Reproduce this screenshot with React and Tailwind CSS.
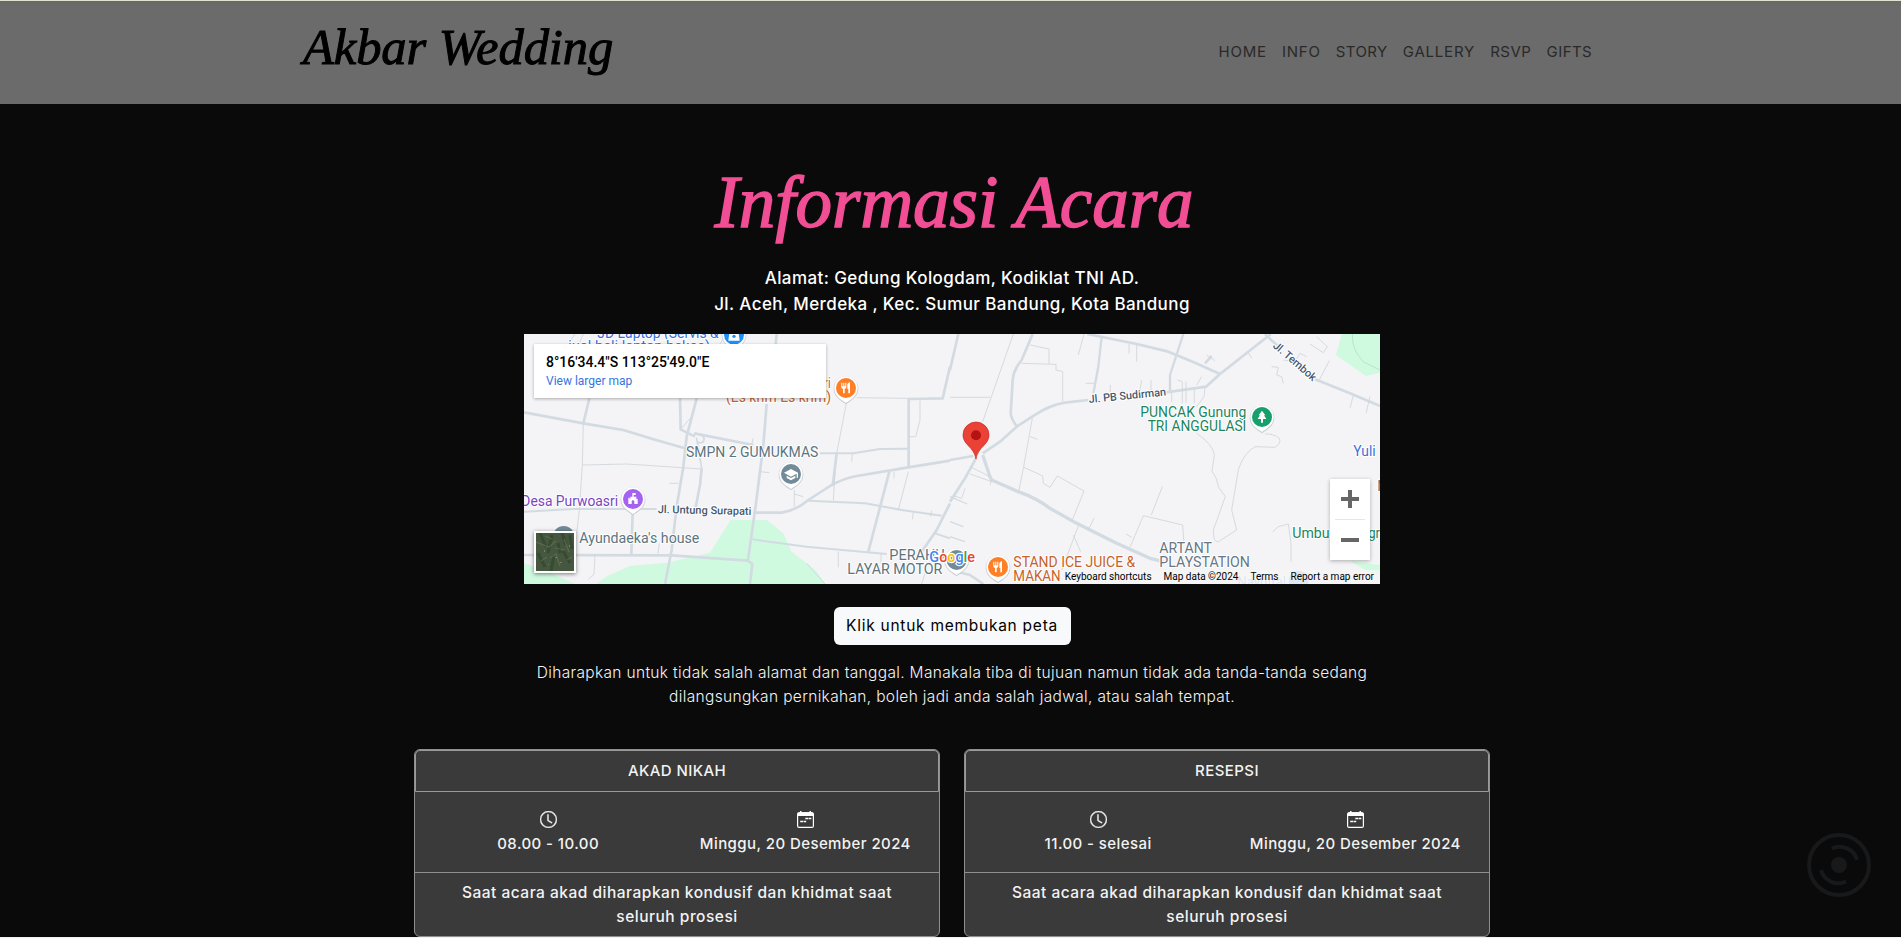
import React from "react";
import { BsClock } from "react-icons/bs";

const NAV = [
  { label: "HOME", cls: "tracking-[0.8px]" },
  { label: "INFO", cls: "tracking-[0.7px]" },
  { label: "STORY", cls: "tracking-[0.4px]" },
  { label: "GALLERY", cls: "tracking-[0.8px]" },
  { label: "RSVP", cls: "tracking-[0.5px]" },
  { label: "GIFTS", cls: "tracking-[0.4px]" },
];

function Header() {
  return (
    <header className="h-[104px] border-t border-[#dfe4d2] bg-[#6b6b6b]">
      <div className="h-[6px] bg-gradient-to-b from-[#686a60] to-[#6b6b6b]" />
      <div className="mx-auto flex h-[91px] w-[1301px] items-center justify-between">
        <a className="mt-[-11px] whitespace-nowrap pl-[3px] font-['Liberation_Serif',cursive] text-[50.6px] italic leading-none tracking-[-0.1px] text-black [-webkit-text-stroke:1px_black]">
          Akbar Wedding
        </a>
        <nav className="-mt-px flex gap-[15.2px] pr-[9px] text-[15px] leading-6 text-[#292929]">
          {NAV.map((n) => (
            <a key={n.label} className={n.cls}>{n.label}</a>
          ))}
        </nav>
      </div>
    </header>
  );
}

function Pin({ x, y, color, children }) {
  return (
    <g transform={`translate(${x} ${y})`}>
      <path d="M0 49C-8 41-37 30-37 2A37 37 0 0 1 37 2C37 30 8 41 0 49z" fill="#c9cdd2" />
      <path d="M0 45C-8 38-35 28-35 0A35 35 0 0 1 35 0C35 28 8 38 0 45z" fill="#fff" />
      <circle r="30" fill={color} />
      <g fill="#fff" stroke="none">{children}</g>
    </g>
  );
}

function Label({ x, y, w, size = 43, fill, children, weight = 400, transform, anchor }) {
  return (
    <text
      x={x} y={y} textLength={w} lengthAdjust="spacingAndGlyphs" fontSize={size} fontWeight={weight}
      fill={fill} stroke="#fff" strokeWidth="6" strokeLinejoin="round" paintOrder="stroke"
      transform={transform} textAnchor={anchor}
    >
      {children}
    </text>
  );
}

const fork = (
  <>
    <path d="M-14-16h3v11h3v-11h3v11h3v-11h3v14q0 4-5 5v13h-5V3q-5-1-5-5z" />
    <path d="M4-8q0-8 8-9v33H7V3H4z" />
  </>
);

function MapCanvas() {
  return (
    <svg viewBox="0 0 856 250" className="block h-[250px] w-[856px] font-['Roboto',sans-serif]">
      <rect width="856" height="250" fill="#f4f3f5" />
      {/* western half */}
      <g transform="translate(-4 -4) scale(0.33333)">
        <g fill="#cffae0">
          <path d="M632 570H740L790 610 815 665 860 700 890 725 916 762H228L262 738 330 708 440 698 570 668z" />
          <path d="M12 700L60 715 165 762H12z" />
        </g>
        <g fill="none" stroke="#d3dbe2" strokeWidth="8" strokeLinejoin="round">
          <path d="M12 247L190 280 310 300 400 328 495 355" />
          <path d="M208 205L190 280" />
          <path d="M480 205L482 298 525 320" />
          <path d="M530 205L500 320 490 410 470 530 455 660 435 762" />
          <path d="M522 310L700 345" />
          <path d="M740 222L730 345 708 520 684 690" />
          <path d="M545 415L540 465 527 532" />
          <path d="M12 545L160 537 410 537" strokeWidth="6" />
          <path d="M338 550L334 672" />
          <path d="M12 675L455 676 684 692 697 702 690 762" />
          <path d="M700 548L785 548Q830 540 865 510L930 468Q970 445 1010 438L1165 412 1290 392" />
          <path d="M900 370L1000 370 1080 357 1163 356" strokeWidth="6" />
          <path d="M1166 412L1166 207 1268 205 1290 110" />
          <path d="M950 370L938 468" />
          <path d="M865 512L1035 520 1145 540 1265 557" strokeWidth="6" />
          <path d="M1108 425L1045 665" />
          <path d="M697 628L860 650 1100 672" strokeWidth="6" />
          <path d="M1290 520L1250 600 1205 665" />
          <path d="M1245 610L1290 625" strokeWidth="6" />
          <path d="M770 12L767 42" />
          <path d="M525 310Q560 315 550 335Q530 345 530 325L545 415" strokeWidth="5" />
        </g>
        <g fill="none" stroke="#cfd5da" strokeWidth="2.5">
          <path d="M190 280L187 405 178 540 170 610" />
          <path d="M187 405L320 402 545 417" />
          <path d="M980 215L950 370M1165 425L1135 540M945 425L940 512M1010 203L1166 205" />
          <path d="M823 480V530M823 492L850 500M720 425L748 428M448 460H475M997 370L995 395" />
          <path d="M1200 212L1200 270 1187 320H1168M1122 425V445M955 665V712M1083 672V700" />
          <path d="M225 676L222 733 205 748M418 640L414 670M1180 548L1177 568M1235 542L1232 560" />
          <path d="M860 700L915 762M1215 730L1205 762M510 265L485 295M699 325L695 345M190 12L178 40" />
          <path d="M165 12L145 42M620 12L600 42" />
        </g>
        <Label x={232} y={24} w={364} fill="#3871d8">JD Laptop (Servis &amp;</Label>
        <Label x={145} y={62} w={425} fill="#3871d8">jual beli laptop bekas)</Label>
        <Pin x={642} y={14} color="#1e90f5">
          <path d="M-14-4H14L17 18H-17z" /><path d="M-7-3v-5a7 7 0 0 1 14 0v5" fill="none" stroke="#fff" strokeWidth="4" />
          <circle cy="5" r="5" fill="#1e90f5" />
        </Pin>
        <Label x={932} y={174} w={140} anchor="end" fill="#c5622c">Es krim ri</Label>
        <Label x={618} y={216} w={315} fill="#c5622c">(Es krim Es krim)</Label>
        <Pin x={978} y={174} color="#ff7f27">{fork}</Pin>
        <Label x={498} y={382} w={397} fill="#5b7480">SMPN 2 GUMUKMAS</Label>
        <Pin x={813} y={432} color="#728b98">
          <path d="M-21-4L0-15 21-4 21 11H17V-1L0 8z" /><path d="M-13 5L0 12 13 5V12L0 19-13 12z" />
        </Pin>
        <Label x={4} y={528} w={290} fill="#7a45c0">Desa Purwoasri</Label>
        <Pin x={339} y={507} color="#a561f2">
          <path d="M-2-18H8V-12H2V-7H10V0H14V15H4V8A4 4 0 0 0-4 8V15H-14V-4H-10V0H-8V-7H-2z" />
        </Pin>
        <Label x={413} y={549} w={281} size={33} weight={500} fill="#46586b" transform="rotate(1.2 413 549)">Jl. Untung Surapati</Label>
        <circle cx="131" cy="620" r="32" fill="#728b98" />
        <Label x={178} y={640} w={360} fill="#5b7480">Ayundaeka's house</Label>
      </g>
      {/* eastern half */}
      <g transform="translate(426 -4) scale(0.33333)">
        <g fill="#cffae0">
          <path d="M1175 12H1290V128L1248 138 1158 75z" />
          <path d="M1200 692L1290 706V735L1245 720z" />
        </g>
        <g fill="none" stroke="#d3dbe2" strokeWidth="8" strokeLinejoin="round">
          <path d="M25 12L0 120M0 390L70 378" />
          <path d="M248 12L215 90Q190 120 188 150L182 250Q185 270 200 288" />
          <path d="M78 385L45 445 0 515" />
          <path d="M98 375L120 440 125 450 205 485Q260 505 300 535L380 580 500 640 600 685 640 695" strokeWidth="10" />
          <path d="M98 370L150 335 200 290 255 255Q300 225 345 218L415 210" />
          <path d="M648 187L768 170 810 132 955 18 962 12" />
          <path d="M412 12L560 42 655 65 735 98 810 132" />
          <path d="M455 20L445 110 430 190M700 12L660 135V185" strokeWidth="7" />
          <path d="M945 12L985 50M1095 148L1200 190 1290 228" />
          <path d="M765 100L785 78" />
          <path d="M0 620L45 635M0 500L52 522M0 575L40 590" strokeWidth="4" />
          <path d="M0 720L60 735 100 762" />
        </g>
        <g fill="none" stroke="#cfd5da" strokeWidth="2.5">
          <path d="M190 12L98 275M0 202H120" />
          <path d="M215 100L318 103V120L338 125V215M240 45L297 57V102M402 12L385 75" />
          <path d="M247 265L220 415 205 490M240 320L262 328M222 412L278 438 280 460 300 472 322 438 402 483 365 575" />
          <path d="M60 410L120 440M60 432L125 455M125 450L120 465" />
          <path d="M637 470L604 555M540 652L580 557 698 585 702 640M528 612L545 622M385 588L335 720M370 615L392 665M432 565L415 600" />
          <path d="M740 310Q790 345 793 375L786 425Q800 440 805 470L826 500 790 600Q790 640 805 635L860 600 845 540 865 420Q880 370 915 350L975 352Q995 340 988 325Q970 310 945 312" />
          <path d="M765 172L762 200 740 230M537 42V70M560 45V95M407 160H432M481 165V200M575 150L570 180M603 150V180" />
          <path d="M683 150L697 155V220M708 155V218M665 187V215M733 178V220M660 150V180M740 165L755 140M770 75L795 92M895 68L905 85" />
          <path d="M1100 20L1132 50 1120 68 1080 42M1070 80L1050 70 1035 95 1000 90M965 110L985 112 980 135 995 140 1000 160M1138 92L1108 150M1210 195L1200 235M1260 200L1248 250" />
          <path d="M1207 12Q1205 60 1240 95L1290 120" stroke="#b6ddc6" />
          <path d="M968 605L985 590 1015 582 1023 640V695M45 475L35 505 12 498" />
        </g>
        <Label x={417} y={219} w={233} size={33} weight={500} fill="#46586b" transform="rotate(-5.5 417 219)">Jl. PB Sudirman</Label>
        <Label x={967} y={50} w={160} size={33} weight={500} fill="#46586b" transform="rotate(41 967 50)">Jl. Tembok</Label>
        <Label x={571} y={261} w={318} fill="#1b8560">PUNCAK Gunung</Label>
        <Label x={593} y={303} w={296} fill="#1b8560">TRI ANGGULASI</Label>
        <Pin x={936} y={261} color="#17a06c">
          <path d="M0-19L10-5H6L13 6H3V17H-3V6H-13L-6-5H-10z" />
        </Pin>
        <Label x={1210} y={377} w={67} fill="#3871d8">Yuli</Label>
        <Label x={1282} y={482} w={30} fill="#5b7480">N</Label>
        <Label x={1027} y={624} w={122} fill="#1b8560">Umbul</Label>
        <Label x={1290} y={624} w={80} anchor="end" fill="#1b8560">Segr</Label>
        <Label x={628} y={669} w={158} fill="#687682">ARTANT</Label>
        <Label x={628} y={711} w={272} fill="#687682">PLAYSTATION</Label>
        <Label x={-182} y={690} w={166} fill="#5b7480">PERAHU</Label>
        <Label x={-308} y={732} w={285} fill="#5b7480">LAYAR MOTOR</Label>
        <Pin x={20} y={690} color="#728b98" />
        <Pin x={144} y={711} color="#ff7f27">{fork}</Pin>
        <Label x={190} y={711} w={366} fill="#c5622c">STAND ICE JUICE &amp;</Label>
        <Label x={190} y={753} w={142} fill="#c5622c">MAKAN</Label>
        <circle cx="1046" cy="752" r="30" fill="#9cc3f2" />
        <Label x={862} y={771} w={146} fill="#8fb4e8">Nayutral</Label>
        {/* destination marker */}
        <path d="M78 387C72 350 39 345 39 315A39 39 0 0 1 117 315C117 345 84 350 78 387z" fill="#ea4335" stroke="#c5221f" strokeWidth="2" />
        <circle cx="78" cy="316" r="15" fill="#b31412" />
        <text x="-62" y="696" fontSize="46" fontWeight="500" textLength="137" lengthAdjust="spacingAndGlyphs" stroke="#fff" strokeWidth="7" paintOrder="stroke">
          <tspan fill="#4285f4">G</tspan><tspan fill="#ea4335">o</tspan><tspan fill="#fbbc04">o</tspan><tspan fill="#4285f4">g</tspan><tspan fill="#34a853">l</tspan><tspan fill="#ea4335">e</tspan>
        </text>
      </g>
    </svg>
  );
}

function Satellite() {
  return (
    <svg viewBox="0 0 38 38" className="block h-full w-full" fill="none">
      <rect width="38" height="38" fill="#46573f" />
      <g stroke="#30462f" strokeWidth="3" opacity=".7">
        <path d="M4 0L10 14M16 2L12 20M26 0L30 12M2 20L9 34M18 22L15 38M27 18L34 30M22 10L24 20M34 2L36 16" />
      </g>
      <g stroke="#6d7656" strokeWidth="1.2" opacity=".6">
        <path d="M0 9L13 14 20 8M14 25L20 21 24 33M28 6L33 19M5 28L11 24M19 15L29 17M9 3L16 6M31 27L36 24" />
      </g>
      <g fill="#8a8f78" opacity=".7">
        <path d="M19 24h2v1h-2zM8 17h1v2H8zM33 12h1v2h-1zM24 29h2v1h-2zM12 31h1v1h-1z" />
      </g>
    </svg>
  );
}

function EventMap() {
  return (
    <div className="relative mt-[17px] h-[250px] w-[856px] overflow-hidden font-['Roboto',sans-serif]">
      <MapCanvas />
      <div className="absolute left-[10px] top-[10px] h-[54px] w-[292px] bg-white pl-3 pt-[10px] shadow-[0_1px_3px_rgba(0,0,0,0.3)]">
        <div className="text-[14px] font-medium leading-4 text-black">8°16'34.4"S 113°25'49.0"E</div>
        <div className="mt-[3px] text-[12px] leading-4 text-[#3574e2]">View larger map</div>
      </div>
      <div className="absolute left-[10px] top-[197px] h-[42px] w-[42px] border-2 border-white shadow-[0_1px_4px_rgba(0,0,0,0.5)]">
        <Satellite />
      </div>
      <div className="absolute left-[806px] top-[145px] flex h-[81px] w-[40px] flex-col items-center bg-white shadow-[0_1px_4px_rgba(0,0,0,0.3)]">
        <div className="flex h-10 items-center justify-center">
          <svg width="18" height="18" viewBox="0 0 18 18" fill="#666"><path d="M7 0h4v7h7v4h-7v7H7v-7H0V7h7z" /></svg>
        </div>
        <div className="h-px w-[30px] bg-[#e6e6e6]" />
        <div className="flex h-10 items-center justify-center">
          <svg width="18" height="4" viewBox="0 0 18 4"><path d="M0 0h18v4H0z" fill="#666" /></svg>
        </div>
      </div>
      <div className="absolute bottom-0 right-0 flex h-[14px] items-center gap-[12px] bg-[#f5f5f5]/75 pl-[5px] pr-[6px] text-[10px] leading-none text-black">
        <span>Keyboard shortcuts</span>
        <span>Map data ©2024</span>
        <span>Terms</span>
        <span>Report a map error</span>
      </div>
    </div>
  );
}

function CalendarIcon() {
  return (
    <svg width="17" height="17" viewBox="0 0 17 17">
      <path d="M2 1.2h13a1.5 1.5 0 0 1 1.5 1.5V5H.5V2.700A1.500 1.500 0 0 1 2 1.200zM3 0h1.500v2H3zM12.500 0H14v2h-1.500z" fill="#fff" />
      <rect x=".6" y="1.800" width="15.800" height="14.600" rx="1.500" fill="none" stroke="#fff" strokeWidth="1.200" />
      <path d="M8.300 7.500h6M3.200 10.500h6" stroke="#fff" strokeWidth="1.500" strokeDasharray="3.200 .5 2.300 0" />
    </svg>
  );
}

function EventCard({ title, time, date }) {
  return (
    <article className="flex h-[188px] w-[525.5px] flex-col rounded-[6px] border border-[#8f8f8f] bg-[#3a3a3a] text-center text-[15px] font-medium leading-6 tracking-[0.42px] text-[#f3f3f3]">
      <h2 className="h-[42px] rounded-t-[5px] border border-[#9a9a9a] pt-[8px]">{title}</h2>
      <div className="grid h-[80px] grid-cols-2 pt-[19px]">
        <div className="flex flex-col items-center gap-[4px] pl-[4px]">
          <BsClock className="block h-[17px] w-[17px] stroke-current [stroke-width:0.4px]" />
          <span>{time}</span>
        </div>
        <div className="flex flex-col items-center gap-[4px] pr-[5px]">
          <CalendarIcon />
          <span className="whitespace-nowrap">{date}</span>
        </div>
      </div>
      <p className="flex-1 border-t border-[#8f8f8f] px-10 pt-[8px] text-[15.5px] tracking-[0.5px]">
        Saat acara akad diharapkan kondusif dan khidmat saat<br />seluruh prosesi
      </p>
    </article>
  );
}

export default function App() {
  return (
    <div className="relative h-[938px] w-full overflow-hidden bg-[#0a0a0a] font-['Inter',sans-serif]">
      <Header />
      <main className="ml-[3px] flex flex-col items-center">
        <h1 className="mb-[26px] mt-[62px] whitespace-nowrap pl-1 font-['Liberation_Serif',cursive] text-[73px] italic leading-none text-[#f14e95] [-webkit-text-stroke:1.5px_#f14e95]">
          Informasi Acara
        </h1>
        <p className="text-center text-[17px] font-medium leading-[26px] tracking-[0.41px] text-white">
          Alamat: Gedung Kologdam, Kodiklat TNI AD.<br />
          Jl. Aceh, Merdeka , Kec. Sumur Bandung, Kota Bandung
        </p>
        <EventMap />
        <a className="mt-[23px] flex h-[38px] w-[237px] items-center justify-center rounded-md bg-[#f8f9fa] text-[15.5px] tracking-[0.74px] text-black">
          Klik untuk membukan peta
        </a>
        <p className="mt-4 whitespace-nowrap text-center text-[15.5px] font-light leading-6 tracking-[0.34px] text-[#f4f4f4]">
          Diharapkan untuk tidak salah alamat dan tanggal. Manakala tiba di tujuan namun tidak ada tanda-tanda sedang<br />
          dilangsungkan pernikahan, boleh jadi anda salah jadwal, atau salah tempat.
        </p>
        <section className="mt-10 flex gap-[24.5px]">
          <EventCard title="AKAD NIKAH" time="08.00 - 10.00" date="Minggu, 20 Desember 2024" />
          <EventCard title="RESEPSI" time="11.00 - selesai" date="Minggu, 20 Desember 2024" />
        </section>
      </main>
      <button className="absolute left-[1807px] top-[833px] h-16 w-16" aria-label="Audio">
        <svg viewBox="0 0 64 64" className="block" fill="none" stroke="#18191b" strokeWidth="4">
          <circle cx="32" cy="32" r="30" />
          <path d="M25 15.500A18 18 0 0 1 50 27M14 37A18 18 0 0 0 39 48.500" />
          <circle cx="32" cy="32" r="8" fill="#18191b" stroke="none" />
        </svg>
      </button>
      <div className="absolute bottom-0 left-0 h-px w-full bg-[#f1f1f1]" />
    </div>
  );
}
